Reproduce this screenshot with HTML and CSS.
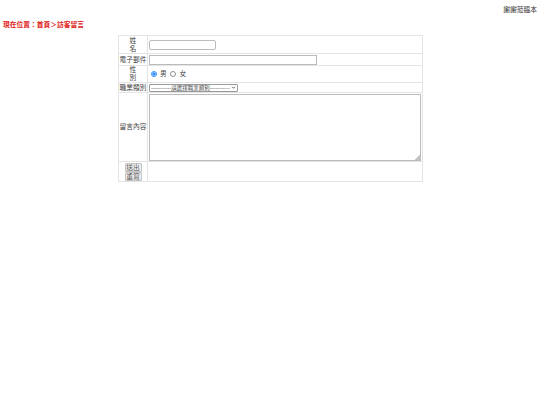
FILE: index.html
```html
<!DOCTYPE html>
<html lang="zh-Hant">

<head>
    <meta charset="UTF-8">
    <title>訪客留言</title>
    <link rel="stylesheet" href="styles.css">
</head>

<body>
    <div class="top-note">謝謝蒞臨本</div>

    <div class="location">現在位置：首頁＞訪客留言</div>

    <form class="guest-form">
        <table class="form-table">
            <tr class="row-name">
                <td class="label">姓<br>名</td>
                <td><input type="text" class="input-name"></td>
            </tr>
            <tr class="row-mail">
                <td class="label">電子郵件</td>
                <td><input type="text" class="input-mail"></td>
            </tr>
            <tr class="row-sex">
                <td class="label">性<br>別</td>
                <td>
                    <input type="radio" name="sex" class="radio" checked> 男
                    <input type="radio" name="sex" class="radio"> 女
                </td>
            </tr>
            <tr class="row-job">
                <td class="label">職業類別</td>
                <td>
                    <select class="input-job">
                        <option>-----------請選擇職業類別-----------</option>
                    </select>
                </td>
            </tr>
            <tr class="row-message">
                <td class="label">留言內容</td>
                <td><textarea class="input-message"></textarea></td>
            </tr>
            <tr class="row-buttons">
                <td class="label">
                    <button type="button" class="small-button">送出</button>
                    <button type="button" class="small-button">重寫</button>
                </td>
                <td></td>
            </tr>
        </table>
    </form>
</body>

</html>
```

FILE: styles.css
```css
body {
    margin: 0;
    padding: 0;
    background-color: #fff;
    color: #444;
    font-family: "Liberation Sans", "Noto Sans CJK TC", sans-serif;
    font-size: 6.75px;
    line-height: 8px;
}

.top-note {
    height: 9px;
    padding: 6px 3px 0 0;
    text-align: right;
    color: #333;
}

.location {
    margin: 6px 0 0 3px;
    height: 14px;
    color: #e01818;
    font-family: "Liberation Serif", "Noto Sans CJK TC", serif;
    font-weight: bold;
}

.guest-form {
    margin: 0;
}

.form-table {
    width: 305px;
    margin: 0 0 0 118px;
    border-collapse: collapse;
    table-layout: fixed;
    border: 1px solid #e4e4e4;
}

.form-table td {
    box-sizing: border-box;
    border: 1px solid #e4e4e4;
    padding: 0 1px;
    vertical-align: middle;
}

.form-table .label {
    width: 29px;
    padding: 0;
    text-align: center;
    white-space: nowrap;
}

.row-name { height: 18px; }
.row-mail { height: 12px; }
.row-sex { height: 17px; }
.row-job { height: 10px; }
.row-message { height: 69px; }
.row-buttons { height: 20px; }

.form-table input[type="text"] {
    display: block;
    box-sizing: border-box;
    height: 10px;
    padding: 0 1px;
    border: 1px solid #bbb;
    background: #fff;
    font-size: 6.75px;
}

.form-table .input-name {
    width: 67px;
    border-radius: 2px;
}

.form-table .input-mail {
    width: 168px;
}

.radio {
    width: 6px;
    height: 6px;
    margin: 0 1.5px 0 1.5px;
    vertical-align: -1px;
    opacity: .8;
}

.input-job {
    display: block;
    box-sizing: border-box;
    width: 89px;
    height: 8px;
    padding: 0 6px 0 1px;
    border: 1px solid #999;
    border-radius: 1px;
    appearance: none;
    background: #fff url("data:image/svg+xml,%3Csvg xmlns='http://www.w3.org/2000/svg' viewBox='0 0 6 4'%3E%3Cpath d='M1 1l2 2 2-2' fill='none' stroke='%23333' stroke-width='1'/%3E%3C/svg%3E") no-repeat right 1px center / 5px 3px;
    color: #444;
    font-family: inherit;
    font-size: 5.5px;
    line-height: 6px;
}

.input-message {
    display: block;
    box-sizing: border-box;
    width: 272px;
    height: 67px;
    margin: 0;
    padding: 1px;
    border: 1px solid #bbb;
    outline: none;
    background: #fff;
}

.input-message::-webkit-resizer {
    background: linear-gradient(135deg, transparent 50%, #c4c4c4 50%) no-repeat right bottom / 5px 5px;
}

.small-button {
    display: block;
    box-sizing: border-box;
    width: 17px;
    height: 9px;
    margin: 0 auto;
    padding: 0;
    border: 1px solid #c4c4c4;
    border-radius: 1px;
    background: #efefef;
    color: #555;
    font-family: inherit;
    font-size: 6.75px;
    line-height: 7px;
}
```
